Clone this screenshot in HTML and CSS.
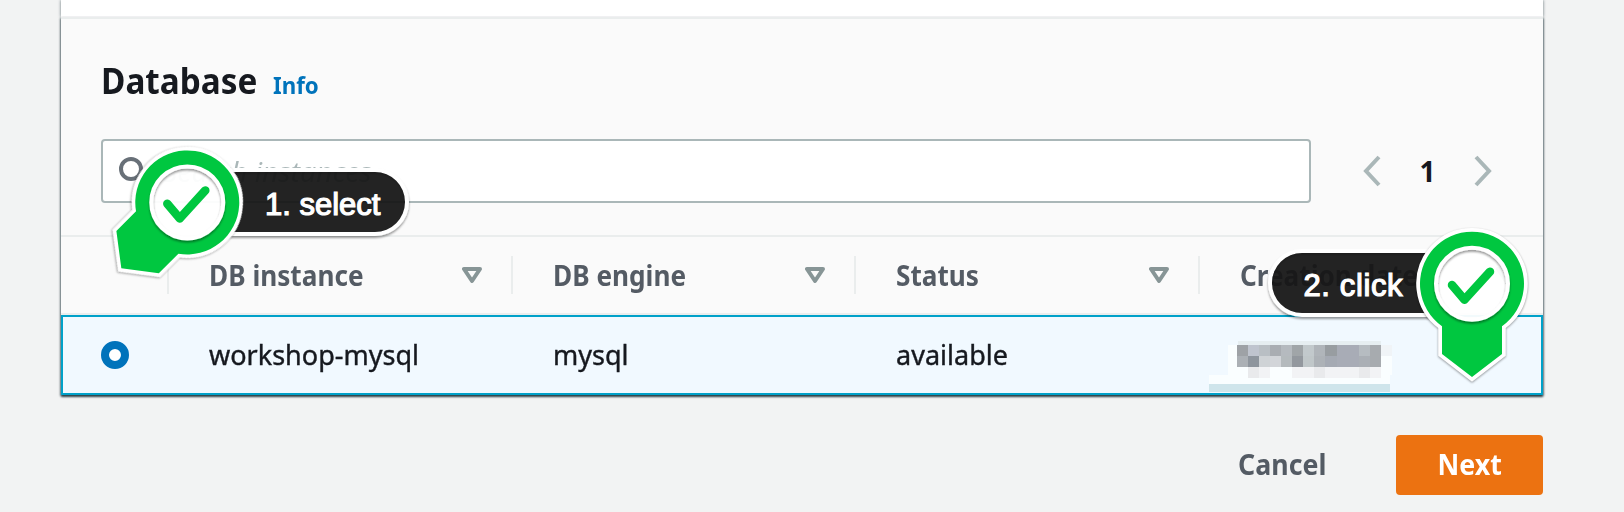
FILE: index.html
```html
<!DOCTYPE html>
<html lang="en">
<head>
<meta charset="utf-8">
<title>Database</title>
<link rel="stylesheet" href="styles.css">
</head>
<body>
<main class="page">
  <div class="previous"></div>
  <section class="panel">
    <header class="panel-head">
      <h2 class="title">Database</h2>
      <a class="info">Info</a>
    </header>
    <div class="tools">
      <div class="search">
        <svg class="search-icon" width="32" height="32" viewBox="0 0 32 32"><circle cx="14" cy="14" r="10"/><path d="M21 21l9 9"/></svg>
        <span class="placeholder">Search instances</span>
      </div>
      <nav class="pager">
        <svg width="18" height="32" viewBox="0 0 18 32"><path d="M16 2L3 16L16 30"/></svg>
        <span class="page-no">1</span>
        <svg width="18" height="32" viewBox="0 0 18 32"><path d="M2 2L15 16L2 30"/></svg>
      </nav>
    </div>
    <div class="row head">
      <div class="cell"></div>
      <div class="cell"><span class="label">DB instance</span><svg class="sort" width="20" height="17" viewBox="0 0 20 17"><path d="M2 2H18L10 14Z"/></svg></div>
      <div class="cell"><span class="label">DB engine</span><svg class="sort" width="20" height="17" viewBox="0 0 20 17"><path d="M2 2H18L10 14Z"/></svg></div>
      <div class="cell"><span class="label">Status</span><svg class="sort" width="20" height="17" viewBox="0 0 20 17"><path d="M2 2H18L10 14Z"/></svg></div>
      <div class="cell"><span class="label">Creation date</span><svg class="sort" width="20" height="17" viewBox="0 0 20 17"><path d="M2 2H18L10 14Z"/></svg></div>
    </div>
    <div class="row selected">
      <div class="cell"><span class="radio"></span></div>
      <div class="cell"><span class="value">workshop-mysql</span></div>
      <div class="cell"><span class="value">mysql</span></div>
      <div class="cell"><span class="value">available</span></div>
      <div class="cell masked">
        <svg width="184" height="52" viewBox="1208 341 184 52" shape-rendering="crispEdges">
          <path fill="#fafeff" d="M1228 345h164v30h-2v9h-181v-9h19z"/>
          <path fill="#e6eef1" d="M1238 341h143v4h-143z"/>
          <path fill="#cfe5eb" d="M1209 384h181v8h-181z"/>
          <path fill="#9ea2a6" d="M1237 345h11v11h-11z"/><path fill="#bfc4ce" d="M1248 345h11v11h-11z"/><path fill="#b9bfc4" d="M1259 345h11v11h-11z"/><path fill="#a9adb2" d="M1270 345h11v11h-11z"/><path fill="#b5babf" d="M1281 345h11v11h-11z"/><path fill="#a0a5a8" d="M1292 345h11v11h-11z"/><path fill="#c2c9cc" d="M1303 345h11v11h-11z"/><path fill="#b0b5ba" d="M1314 345h11v11h-11z"/><path fill="#989da1" d="M1325 345h12v11h-12z"/><path fill="#a8acb6" d="M1337 345h22v22h-22z"/><path fill="#b6bcc1" d="M1359 345h11v11h-11z"/><path fill="#a7abaf" d="M1370 345h11v22h-11z"/><path fill="#f0f4f7" d="M1381 345h11v11h-11z"/>
          <path fill="#abb0b5" d="M1237 356h11v11h-11z"/><path fill="#8e959d" d="M1248 356h11v11h-11z"/><path fill="#cfd3d6" d="M1259 356h11v11h-11z"/><path fill="#d2d5d9" d="M1270 356h11v11h-11z"/><path fill="#b4babd" d="M1281 356h11v11h-11z"/><path fill="#93989e" d="M1292 356h11v11h-11z"/><path fill="#c0c7c9" d="M1303 356h11v11h-11z"/><path fill="#adb2b7" d="M1314 356h11v11h-11z"/><path fill="#a5aab3" d="M1325 356h12v11h-12z"/><path fill="#aaafb5" d="M1359 356h11v11h-11z"/>
          <path fill="#e9eaec" d="M1248 367h11v11h-11zM1314 367h11v11h-11zM1359 367h11v11h-11z"/><path fill="#f2f3f5" d="M1259 367h11v11h-11zM1292 367h22v11h-22zM1325 367h34v11h-34zM1370 367h11v11h-11z"/>
        </svg>
      </div>
    </div>
  </section>
  <footer class="actions">
    <button class="btn link"><span>Cancel</span></button>
    <button class="btn primary"><span>Next</span></button>
  </footer>
</main>
<svg class="annotations" width="1624" height="512" viewBox="0 0 1624 512">
  <defs>
    <filter id="shadow" x="-20%" y="-20%" width="140%" height="150%"><feDropShadow dx="0" dy="2" stdDeviation="1.3" flood-color="#000" flood-opacity=".4"/></filter>
    <g id="ring">
      <circle r="36" fill="#fff" fill-opacity=".95"/>
      <circle r="36" fill="none" stroke="#fff" stroke-width="4" filter="url(#shadow)"/>
      <path d="M-20 1.3L-7.5 16L18 -12" fill="none" stroke="#00c740" stroke-width="8.5" stroke-linecap="round" stroke-linejoin="round"/>
    </g>
    <path id="pin" d="M-30 42.5A52 52 0 1 1 30 42.5V70.3L0 93.3L-30 70.3ZM0 -36A36 36 0 1 0 0 36A36 36 0 1 0 0 -36Z"/>
    <path id="pin-edge" d="M-30 42.5A52 52 0 1 1 30 42.5V70.3L0 93.3L-30 70.3Z"/>
  </defs>
  <g class="tag">
    <path class="tag-edge" filter="url(#shadow)" d="M229 170H375A32 32 0 0 1 375 234H225"/>
    <path class="tag-fill" d="M231 172H375A30 30 0 0 1 375 232H227Q237 218 238 202Q238 186 231 172Z"/>
    <text x="265" y="215">1. select</text>
  </g>
  <g transform="translate(187.3 202.4)">
    <g transform="rotate(45)"><use href="#pin-edge" class="pin-edge"/></g>
    <g transform="rotate(45)"><use href="#pin" class="pin-fill"/></g>
    <use href="#ring"/>
  </g>
  <g class="tag">
    <path class="tag-edge" filter="url(#shadow)" d="M1430 251H1302A32 32 0 0 0 1302 315H1434"/>
    <path class="tag-fill" d="M1428 253H1302A30 30 0 0 0 1302 313H1428Q1421 300 1420 284Q1421 266 1428 253Z"/>
    <text x="1303.5" y="296" textLength="99">2. click</text>
  </g>
  <g transform="translate(1472 283.7)">
    <use href="#pin-edge" class="pin-edge"/><use href="#pin" class="pin-fill"/>
    <use href="#ring"/>
  </g>
</svg>
</body>
</html>
```
FILE: styles.css
```css
* { box-sizing: border-box; }
body { margin: 0; background: #f2f3f3; font-family: "Noto Sans", "Open Sans", sans-serif; font-size: 28px; color: #16191f; }
.page { width: 1482px; height: 512px; margin-left: 61px; overflow: visible; }
.previous { height: 17px; background: #fff; box-shadow: 0 0 3px rgba(0, 28, 36, .6); }
.panel { position: relative; height: 378px; background: #fafafa; border-top: 2px solid #eaeded; box-shadow: 0 2px 2px rgba(0, 28, 36, .65), 1px 1px 2px rgba(0, 28, 36, .4), -1px 1px 2px rgba(0, 28, 36, .4); }
.panel-head { display: flex; align-items: baseline; height: 120px; padding: 37px 0 0 40px; }
.title { width: 172px; margin: 0; font-size: 36px; line-height: 49px; font-weight: 700; transform: scaleX(.925); transform-origin: left; }
.info { color: #0073bb; font-size: 24px; line-height: 32px; font-weight: 700; transform: scaleX(.93); transform-origin: left; }
.tools { display: flex; height: 98px; padding-left: 40px; border-bottom: 2px solid #eaeded; }
.search { display: flex; align-items: center; width: 1210px; height: 64px; padding-left: 14px; border: 2px solid #aab7b8; border-radius: 4px; background: #fff; }
.search-icon { fill: none; stroke: #687078; stroke-width: 4; }
.placeholder { margin-left: 14px; color: #aab7b8; font-style: italic; transform: scaleX(1.01); transform-origin: left; }
.pager { display: flex; align-items: center; height: 64px; margin-left: 52px; fill: none; stroke: #aab7b8; stroke-width: 4; }
.page-no { width: 93px; padding-bottom: 1px; text-align: center; font-weight: 700; }
.row { display: grid; grid-template-columns: 106px 343.7px 343.7px 343.7px 1fr; }
.head { height: 78px; border-bottom: 2px solid #eaeded; }
.cell { display: flex; align-items: center; padding-left: 42px; }
.head .cell { height: 38px; margin: 19px -2px 0 0; padding-right: 29px; border-right: 2px solid #eaeded; justify-content: space-between; }
.head .cell:last-child { border-right: 0; }
.label { padding-bottom: 1px; color: #545b64; font-weight: 700; transform: scaleX(.935); transform-origin: left; white-space: nowrap; }
.sort { fill: none; stroke: #879596; stroke-width: 4; stroke-linejoin: round; }
.selected { height: 80px; border: 2px solid #00a1c9; background: #f1f9ff; grid-template-columns: 104px 343.7px 343.7px 343.7px 1fr; }
.value { padding-bottom: 2px; -webkit-text-stroke: .4px #16191f; transform: scaleX(.965); transform-origin: left; }
.selected .cell:first-child { padding-left: 38px; }
.radio { width: 28px; height: 28px; border: 8px solid #0073bb; border-radius: 50%; background: #fff; }
.masked { align-items: flex-start; padding: 24px 0 0 10px; }
.actions { display: flex; justify-content: flex-end; padding-top: 40px; }
.btn { height: 60px; padding: 0 0 2px; border: 0; border-radius: 4px; font: 700 28px "Noto Sans", sans-serif; background: none; }
.btn span { display: inline-block; transform: scaleX(.955); }
.link { width: 174px; margin-right: 27px; color: #545b64; }
.primary { width: 147px; color: #fff; background: #ec7211; }
.annotations { position: absolute; left: 0; top: 0; }
.tag-edge { fill: none; stroke: #fff; stroke-width: 4; }
.tag-fill { fill: #151515; fill-opacity: .94; }
.tag text { fill: #fff; stroke: #fff; stroke-width: 1.2; font: 31px "Liberation Sans", Arial, sans-serif; }
.pin-edge { fill: none; stroke: #fff; stroke-width: 7.5; filter: drop-shadow(0 1px 1.2px rgba(0, 0, 0, .4)); }
.pin-fill { fill: #00c740; fill-rule: evenodd; }
```
